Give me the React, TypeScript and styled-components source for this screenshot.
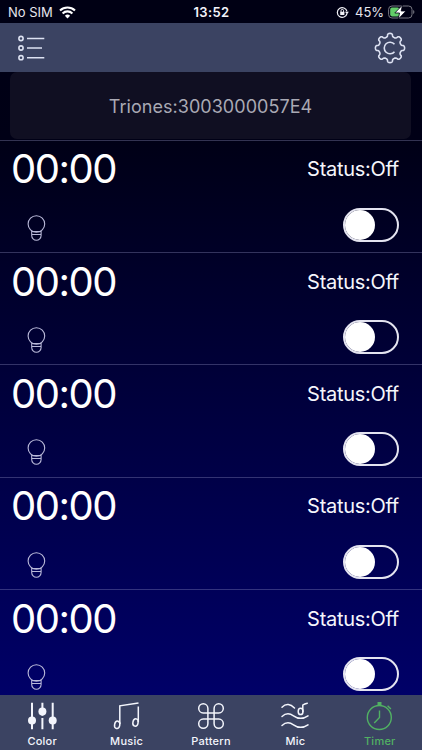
import React from "react";
import styled, { createGlobalStyle } from "styled-components";

const GlobalStyle = createGlobalStyle`
  * { box-sizing: border-box; }
  body { margin: 0; background: #000016; overflow: hidden; }
  svg { display: block; flex: none; }
`;

const Screen = styled.main`
  width: 422px;
  height: 750px;
  display: flex;
  flex-direction: column;
  overflow: hidden;
  color: #fff;
  font-family: Inter, "Liberation Sans", sans-serif;
  background: linear-gradient(180deg, #000014 0, #000016 140px, #00006a 710px);
`;

const StatusBar = styled.div`
  height: 23px;
  flex: none;
  display: grid;
  grid-template-columns: 1fr auto 1fr;
  align-items: center;
  padding: 1px 7px 0 8px;
  font-size: 13px;
  line-height: 20px;
  background: #000014;
`;

const StatusGroup = styled.div<{ $end?: boolean }>`
  display: flex;
  align-items: center;
  justify-content: ${(p) => (p.$end ? "flex-end" : "flex-start")};
  gap: 6px;
  color: #e6e6ee;
`;

const Carrier = styled.span`
  letter-spacing: 0;
`;

const Percent = styled.span`
  letter-spacing: -0.05px;
  margin-right: -2px;
`;

const Clock = styled.span`
  font-weight: 600;
  letter-spacing: 0.4px;
  color: #f4f4fa;
`;

const NavBar = styled.header`
  height: 49px;
  flex: none;
  display: flex;
  align-items: center;
  justify-content: space-between;
  padding: 0 15px 0 17px;
  background: #3b4362;
`;

const IconButton = styled.button`
  padding: 0;
  border: 0;
  background: none;
  color: #dde2f2;
  cursor: pointer;
`;

const DeviceCard = styled.div`
  height: 67px;
  flex: none;
  margin: 0 11px 0.5px 10px;
  display: flex;
  align-items: center;
  justify-content: center;
  border-radius: 7px;
  background: #100f22;
  color: #a9a9b4;
  font-size: 18px;
  letter-spacing: 0.04px;
  padding-top: 1px;
`;

const TimerList = styled.section`
  flex: 1;
  min-height: 0;
  overflow: hidden;
`;

const TimerRow = styled.article`
  height: 112.35px;
  border-top: 1.5px solid rgba(150, 150, 200, 0.34);
  padding: 0 23px 0 11px;
`;

const RowLine = styled.div<{ $height: number }>`
  height: ${(p) => p.$height}px;
  display: flex;
  align-items: center;
  justify-content: space-between;
`;

const Time = styled.span`
  padding-top: 1.6px;
  font-size: 40px;
  font-weight: 400;
  line-height: 48px;
  letter-spacing: -1.5px;
`;

const Status = styled.span`
  padding-top: 1.6px;
  font-size: 20px;
  letter-spacing: -0.28px;
  color: #f6f6fc;
`;

const BulbSlot = styled.span`
  padding: 6px 0 0 16px;
`;

const Switch = styled.button`
  width: 56px;
  height: 34px;
  padding: 0;
  border: 2px solid #e4e4f0;
  border-radius: 17px;
  background: transparent;
  display: flex;
  align-items: center;
`;

const Thumb = styled.span`
  width: 30px;
  height: 30px;
  border-radius: 50%;
  background: #fff;
`;

const TabBar = styled.nav`
  height: 55px;
  flex: none;
  display: grid;
  grid-template-columns: repeat(5, 1fr);
  background: #3b4362;
`;

const Tab = styled.button<{ $active?: boolean }>`
  padding: 6px 0 0;
  border: 0;
  background: none;
  display: flex;
  flex-direction: column;
  align-items: center;
  gap: 2px;
  color: ${(p) => (p.$active ? "#51b163" : "#f3f5fc")};
  font: 500 11px/16px Inter, "Liberation Sans", sans-serif;
  letter-spacing: 0.25px;
`;

const WifiIcon = () => (
  <svg width="17" height="13" viewBox="0 0 17 13" fill="none" stroke="#fff" strokeWidth="2.1">
    <path d="M1 4.6a10.8 10.8 0 0 1 15 0M3.6 7.4a7 7 0 0 1 9.8 0" />
    <path d="M8.5 12.4 5.9 9.8a3.8 3.8 0 0 1 5.2 0z" fill="#fff" stroke="none" />
  </svg>
);

const RotationLockIcon = () => (
  <svg width="13" height="13" viewBox="0 0 13 13" fill="none" stroke="#f2f2f8" strokeWidth="1.2">
    <path d="M11 7.6A4.9 4.9 0 1 1 11 5.4" />
    <path d="m8.9 5.7 2.1 2.6 1.9-2.600z" fill="#f2f2f8" stroke="none" />
    <path d="M5 6V4.700a1.300 1.300 0 0 1 2.600 0V6" strokeWidth="1" />
    <rect x="4.200" y="5.700" width="4.200" height="3.300" rx=".5" fill="#f2f2f8" stroke="none" />
  </svg>
);

const BatteryIcon = () => (
  <svg width="27" height="14" viewBox="0 0 27 14">
    <rect x=".6" y="1" width="23.4" height="12" rx="3.4" fill="none" stroke="#777782" strokeWidth="1" />
    <path d="M25.2 5v4c1.6-.7 1.6-3.3 0-4z" fill="#777782" />
    <rect x="2.2" y="2.6" width="9.2" height="8.8" rx="1.8" fill="#63cd69" />
    <path d="M14.5 0 6.8 8h4.7l-1.2 6L18 6h-4.8z" fill="#fff" stroke="#000014" strokeWidth=".8" />
  </svg>
);

const ListIcon = () => (
  <svg width="29" height="28" viewBox="0 0 29 28" fill="none" stroke="currentColor" strokeWidth="1.6">
    <circle cx="4" cy="4.5" r="2.1" />
    <circle cx="4" cy="14" r="2.1" />
    <circle cx="4" cy="23.7" r="2.1" />
    <path d="M10 4.5h17.3M10 14h15M10 23.7h17.3" />
  </svg>
);

// Eight rounded teeth: the radius oscillates around the gear's pitch circle.
const gearPoints = Array.from({ length: 160 }, (_, i) => {
  const angle = (i / 160) * Math.PI * 2;
  const radius = 12.9 + 1.7 * Math.cos(angle * 8);
  const twist = angle + 0.045 * Math.sin(angle * 16);
  return `${(radius * Math.sin(twist)).toFixed(2)},${(-radius * Math.cos(twist)).toFixed(2)}`;
}).join(" ");

const GearIcon = () => (
  <svg width="34" height="34" viewBox="-17 -17 34 34" fill="none" stroke="currentColor" strokeWidth="1.6" strokeLinejoin="round">
    <polygon points={gearPoints} />
    <path d="M4.5-3.700A5.800 5.800 0 1 0 4.500 3.700" />
  </svg>
);

const BulbIcon = () => (
  <svg width="19" height="28" viewBox="0 0 19 28" fill="none" stroke="#b9b9d9" strokeWidth="1.1">
    <circle cx="9.4" cy="10" r="8.3" />
    <path d="M4.7 17v4.5a4.7 4.7 0 0 0 9.4 0V17M4.7 20.5h9.4M5 17.5h9" />
  </svg>
);

const SlidersIcon = () => (
  <svg width="30" height="30" viewBox="0 0 30 30" stroke="currentColor" strokeWidth="2">
    <path d="M5 1.8v26.4M15.4 1.8v13M15.4 17v11.2M25.7 1.8v26.4" />
    <g fill="currentColor" stroke="none">
      <circle cx="5" cy="19.6" r="4" />
      <circle cx="15.4" cy="10.6" r="4" />
      <circle cx="25.7" cy="19.6" r="4" />
    </g>
  </svg>
);

const MusicIcon = () => (
  <svg width="30" height="30" viewBox="0 0 30 30" fill="none" stroke="currentColor" strokeWidth="1.5">
    <path d="M7.8 23V4.8L26.5 2M26.3 5.5V21" />
    <ellipse cx="5.2" cy="23.8" rx="2.6" ry="3.7" transform="rotate(12 5.2 23.8)" />
    <ellipse cx="23.5" cy="21.5" rx="2.6" ry="3.7" transform="rotate(12 23.5 21.5)" />
  </svg>
);

const CommandIcon = () => (
  <svg width="30" height="30" viewBox="0 0 30 30" fill="none" stroke="currentColor" strokeWidth="1.5">
    <path d="M12 12H7.200a4.600 4.600 0 1 1 4.700-4.600v15.400a4.600 4.600 0 1 1-4.700-4.700h15.600a4.600 4.600 0 1 1-4.700 4.700V7.400a4.600 4.600 0 1 1 4.700 4.600z" />
  </svg>
);

const MicIcon = () => (
  <svg width="30" height="30" viewBox="0 0 30 30" fill="none" stroke="currentColor" strokeWidth="1.5" strokeLinecap="round">
    <path d="M2 6.2c4-4 8.5-3.2 12.5.8" />
    <path d="M2 15.5c3.5-3.3 7.5-3.5 11.5-.7 5 3.6 9.5 3.4 14.5 0" />
    <path d="M2 24.5c3.5-3.3 7.5-3.5 11.5-.7 5 3.6 9.5 3.4 14.5 0" />
    <path d="M22.8 10.5V4c1.3-1 2.7-1.5 4.5-1.8" />
    <ellipse cx="20.6" cy="10.4" rx="2.4" ry="3.2" />
  </svg>
);

const TimerIcon = () => (
  <svg width="30" height="30" viewBox="0 0 30 30" fill="none" stroke="currentColor" strokeWidth="1.4">
    <circle cx="14.300" cy="16.500" r="12" />
    <path d="M14.500 9.500v7L9.200 22M22.600 4.800l3.300 3.200" />
    <path d="M12.500 1h4v3.600h-4z" fill="currentColor" stroke="none" />
  </svg>
);

const timers = Array.from({ length: 5 }, (_, id) => ({ id, time: "00:00", status: "Off" }));

const tabs = [
  { label: "Color", Icon: SlidersIcon },
  { label: "Music", Icon: MusicIcon },
  { label: "Pattern", Icon: CommandIcon },
  { label: "Mic", Icon: MicIcon },
  { label: "Timer", Icon: TimerIcon, active: true },
];

export default function App() {
  return (
    <>
      <GlobalStyle />
      <Screen>
        <StatusBar>
          <StatusGroup>
            <Carrier>No SIM</Carrier>
            <WifiIcon />
          </StatusGroup>
          <Clock>13:52</Clock>
          <StatusGroup $end>
            <RotationLockIcon />
            <Percent>45%</Percent>
            <BatteryIcon />
          </StatusGroup>
        </StatusBar>
        <NavBar>
          <IconButton aria-label="Devices"><ListIcon /></IconButton>
          <IconButton aria-label="Settings"><GearIcon /></IconButton>
        </NavBar>
        <DeviceCard>Triones:3003000057E4</DeviceCard>
        <TimerList>
          {timers.map((t) => (
            <TimerRow key={t.id}>
              <RowLine $height={56}>
                <Time>{t.time}</Time>
                <Status>Status:{t.status}</Status>
              </RowLine>
              <RowLine $height={56}>
                <BulbSlot><BulbIcon /></BulbSlot>
                <Switch role="switch" aria-checked={false} aria-label="Timer enabled"><Thumb /></Switch>
              </RowLine>
            </TimerRow>
          ))}
        </TimerList>
        <TabBar>
          {tabs.map(({ label, Icon, active }) => (
            <Tab key={label} $active={active}><Icon />{label}</Tab>
          ))}
        </TabBar>
      </Screen>
    </>
  );
}
